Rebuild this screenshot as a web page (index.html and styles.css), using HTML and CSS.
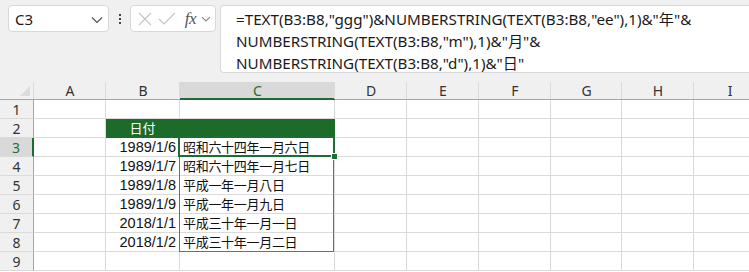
FILE: index.html
```html
<!DOCTYPE html>
<html lang="ja">
<head>
  <meta charset="UTF-8">
  <title>Excel NUMBERSTRING</title>
  <link rel="stylesheet" href="styles.css">
</head>
<body>
  <div class="toolbar">
    <div class="name-box">
      <span>C3</span>
      <svg class="chev" width="12" height="8" viewBox="0 0 12 8"><path d="M1 1.5 L6 6.5 L11 1.5" fill="none" stroke="#555" stroke-width="1.2"/></svg>
    </div>
    <div class="dots"><i></i><i></i><i></i></div>
    <div class="fx-box">
      <svg width="16" height="16" viewBox="0 0 16 16"><path d="M2 2 L14 14 M14 2 L2 14" stroke="#c6c6c6" stroke-width="1.2"/></svg>
      <svg width="18" height="16" viewBox="0 0 18 16"><path d="M1 8 L6 13 L17 2" fill="none" stroke="#c6c6c6" stroke-width="1.2"/></svg>
      <span class="fx">fx</span>
      <svg width="10" height="8" viewBox="0 0 10 8"><path d="M1 2 L5 6 L9 2" fill="none" stroke="#888" stroke-width="1.1"/></svg>
    </div>
    <div class="formula">=TEXT(B3:B8,"ggg")&amp;NUMBERSTRING(TEXT(B3:B8,"ee"),1)&amp;"年"&amp;<br>NUMBERSTRING(TEXT(B3:B8,"m"),1)&amp;"月"&amp;<br>NUMBERSTRING(TEXT(B3:B8,"d"),1)&amp;"日"</div>
  </div>

  <div class="sheet">
    <div class="grid">
      <div class="hd corner"><span class="tri"></span></div>
      <div class="hd">A</div><div class="hd">B</div><div class="hd sel-col">C</div><div class="hd">D</div>
      <div class="hd">E</div><div class="hd">F</div><div class="hd">G</div><div class="hd">H</div><div class="hd">I</div>

      <div class="rh">1</div><div class="c"></div><div class="c"></div><div class="c"></div><div class="c"></div><div class="c"></div><div class="c"></div><div class="c"></div><div class="c"></div><div class="c"></div>
      <div class="rh">2</div><div class="c"></div><div class="c head-fill">日付</div><div class="c head-fill"></div><div class="c"></div><div class="c"></div><div class="c"></div><div class="c"></div><div class="c"></div><div class="c"></div>
      <div class="rh sel-row">3</div><div class="c"></div><div class="c num">1989/1/6</div><div class="c jp">昭和六十四年一月六日</div><div class="c"></div><div class="c"></div><div class="c"></div><div class="c"></div><div class="c"></div><div class="c"></div>
      <div class="rh">4</div><div class="c"></div><div class="c num">1989/1/7</div><div class="c jp">昭和六十四年一月七日</div><div class="c"></div><div class="c"></div><div class="c"></div><div class="c"></div><div class="c"></div><div class="c"></div>
      <div class="rh">5</div><div class="c"></div><div class="c num">1989/1/8</div><div class="c jp">平成一年一月八日</div><div class="c"></div><div class="c"></div><div class="c"></div><div class="c"></div><div class="c"></div><div class="c"></div>
      <div class="rh">6</div><div class="c"></div><div class="c num">1989/1/9</div><div class="c jp">平成一年一月九日</div><div class="c"></div><div class="c"></div><div class="c"></div><div class="c"></div><div class="c"></div><div class="c"></div>
      <div class="rh">7</div><div class="c"></div><div class="c num">2018/1/1</div><div class="c jp">平成三十年一月一日</div><div class="c"></div><div class="c"></div><div class="c"></div><div class="c"></div><div class="c"></div><div class="c"></div>
      <div class="rh">8</div><div class="c"></div><div class="c num">2018/1/2</div><div class="c jp">平成三十年一月二日</div><div class="c"></div><div class="c"></div><div class="c"></div><div class="c"></div><div class="c"></div><div class="c"></div>
      <div class="rh">9</div><div class="c"></div><div class="c"></div><div class="c"></div><div class="c"></div><div class="c"></div><div class="c"></div><div class="c"></div><div class="c"></div><div class="c"></div>
    </div>
    <!-- spill range and active cell lie over the grid -->
    <div class="spill"></div>
    <div class="active"><span class="handle"></span></div>
  </div>
</body>
</html>
```

FILE: styles.css
```css
body {
  margin: 0;
  background-color: #f0f0f0;
  font-family: "Noto Sans", "Noto Sans CJK JP", sans-serif;
  color: #222;
  overflow: hidden;
}
.toolbar {
  display: flex;
  align-items: flex-start;
  height: 82px;
  padding: 5px 0 0 8px;
  box-sizing: border-box;
}
.name-box {
  width: 101px;
  height: 27px;
  box-sizing: border-box;
  background-color: white;
  border: 1px solid #d8d8d8;
  border-radius: 4px;
  display: flex;
  align-items: center;
  justify-content: space-between;
  padding: 0 5px 0 6px;
  font-size: 15px;
  color: #1a1a1a;
}
.name-box .chev {
  margin-top: 2px;
}
.dots {
  width: 21px;
  height: 27px;
  display: flex;
  flex-direction: column;
  align-items: center;
  justify-content: center;
  gap: 2px;
}
.dots i {
  width: 2px;
  height: 2px;
  background-color: #444;
}
.fx-box {
  width: 86px;
  height: 27px;
  box-sizing: border-box;
  background-color: white;
  border: 1px solid #d8d8d8;
  border-radius: 4px;
  display: flex;
  align-items: center;
  padding: 0 4px 0 6px;
  gap: 5px;
}
.fx-box .fx {
  font-family: "Liberation Serif", "DejaVu Serif", serif;
  font-style: italic;
  font-size: 17px;
  color: #555;
  margin-left: 4px;
  letter-spacing: -0.5px;
}
.formula {
  flex: 1;
  margin-left: 4px;
  height: 68px;
  box-sizing: border-box;
  background-color: white;
  border: 1px solid #d8d8d8;
  border-right: none;
  border-radius: 4px 0 0 4px;
  padding: 2px 0 0 15px;
  font-size: 15.2px;
  line-height: 22px;
  color: #1a1a1a;
  white-space: nowrap;
}
.sheet {
  position: relative;
  background-color: white;
  height: 190px;
}
.grid {
  display: grid;
  grid-template-columns: 34px 72px 74px 155px 72px 72px 72px 71px 72px 72px;
  grid-template-rows: 18px;
  grid-auto-rows: 19px;
}
.hd, .rh {
  background-color: #f0f0f0;
  box-sizing: border-box;
  display: flex;
  align-items: center;
  justify-content: center;
  font-size: 14px;
  color: #333;
}
.hd {
  border-bottom: 1px solid #a6a6a6;
  position: relative;
}
.hd + .hd::before {
  content: "";
  position: absolute;
  left: -1px;
  top: 0;
  bottom: 0;
  border-left: 1px solid #dadada;
}
.corner {
  justify-content: flex-end;
  align-items: flex-end;
  border-right: 1px solid #a6a6a6;
  padding: 0 3px 3px 0;
}
.tri {
  width: 0;
  height: 0;
  border-left: 10px solid transparent;
  border-bottom: 10px solid #dcdcdc;
}
.rh {
  border-right: 1px solid #a6a6a6;
  border-bottom: 1px solid #dadada;
  font-size: 14px;
}
.sel-col {
  background-color: #d9d9d9;
  border-bottom: 2px solid #1e6c35;
  color: #1e6c35;
}
.sel-row {
  background-color: #d9d9d9;
  border-right: 2px solid #1e6c35;
  color: #1e6c35;
}
.c {
  box-sizing: border-box;
  border-right: 1px solid #dadada;
  border-bottom: 1px solid #dadada;
  font-family: "Noto Sans CJK JP", sans-serif;
  font-size: 13px;
  line-height: 18px;
  white-space: nowrap;
  overflow: hidden;
  color: #111;
}
.head-fill {
  background-color: #1d6b2a;
  border-color: #1d6b2a;
  color: white;
  text-align: center;
}
.num {
  text-align: right;
  padding-right: 3px;
  font-family: "Liberation Sans", sans-serif;
  font-size: 14.5px;
}
.jp {
  padding-left: 3px;
  letter-spacing: -0.3px;
}
.spill {
  position: absolute;
  left: 179px;
  top: 55px;
  width: 155px;
  height: 115px;
  box-sizing: border-box;
  border: 1px solid #4a72c2;
}
.active {
  position: absolute;
  left: 178px;
  top: 54px;
  width: 157px;
  height: 21px;
  box-sizing: border-box;
  border: 2px solid #1e6c35;
}
.handle {
  position: absolute;
  right: -5px;
  bottom: -5px;
  width: 5px;
  height: 5px;
  background-color: #1e6c35;
  border: 1px solid white;
}
```
